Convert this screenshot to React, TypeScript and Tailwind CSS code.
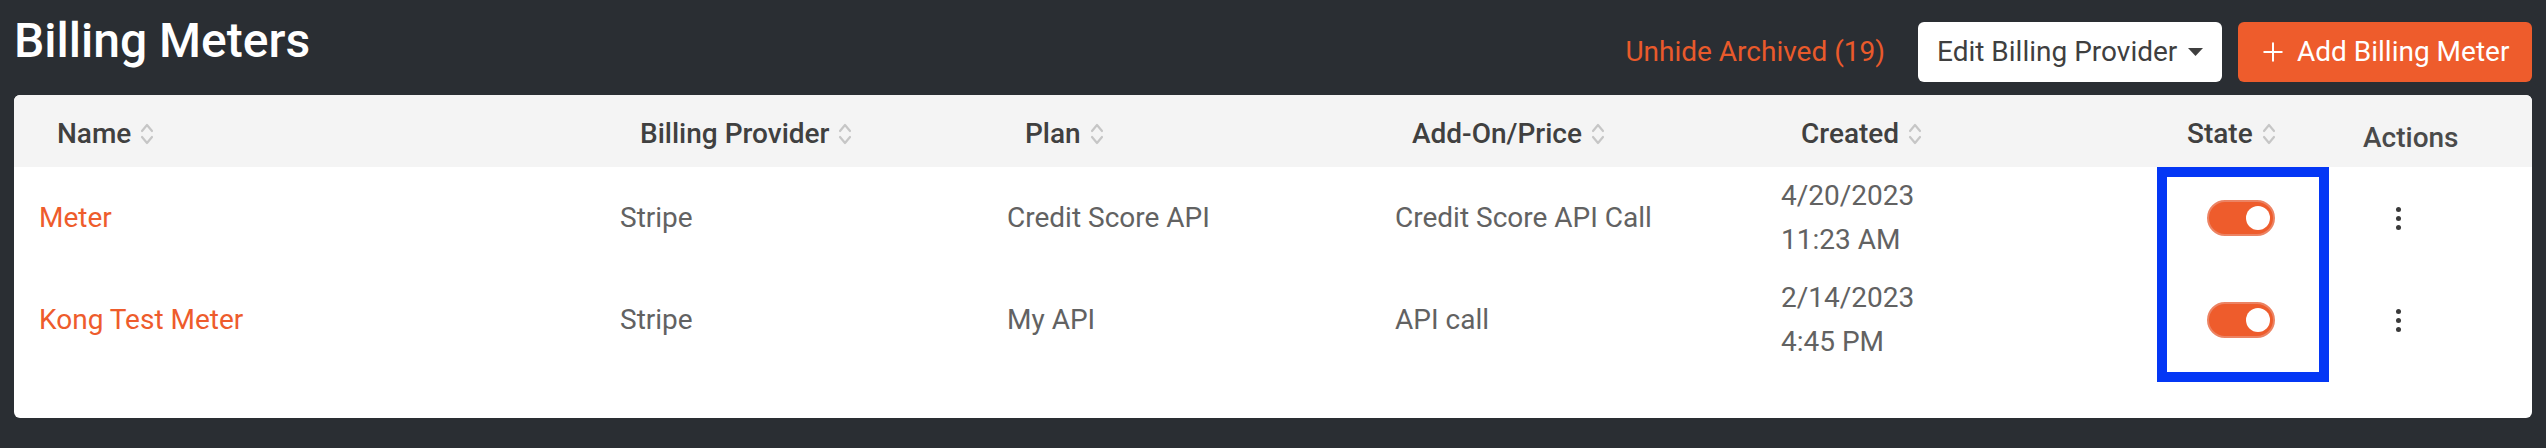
import { Plus } from "lucide-react";

const font = { fontFamily: "Roboto, 'Liberation Sans', sans-serif" };

type Meter = {
  name: string;
  provider: string;
  plan: string;
  addon: string;
  date: string;
  time: string;
};

const meters: Meter[] = [
  { name: "Meter", provider: "Stripe", plan: "Credit Score API", addon: "Credit Score API Call", date: "4/20/2023", time: "11:23 AM" },
  { name: "Kong Test Meter", provider: "Stripe", plan: "My API", addon: "API call", date: "2/14/2023", time: "4:45 PM" },
];

function SortIcon() {
  return (
    <svg width="14" height="24" viewBox="0 0 14 24" fill="none" className="ml-[9px] shrink-0">
      <polyline points="2,9 7,3 12,9" stroke="#c6c6c6" strokeWidth="2.2" strokeLinecap="round" strokeLinejoin="round" />
      <polyline points="2,15 7,21 12,15" stroke="#c6c6c6" strokeWidth="2.2" strokeLinecap="round" strokeLinejoin="round" />
    </svg>
  );
}

function HeaderLabel({ label, className }: { label: string; className: string }) {
  return (
    <div className={`flex items-center pt-[6px] ${className}`}>
      <span className="text-[28px] leading-[42px] font-medium text-[#404040]">{label}</span>
      <SortIcon />
    </div>
  );
}

function Toggle() {
  return (
    <div className="w-[68px] h-[36px] rounded-full bg-[#ee5c2c] border-2 border-[#ec8363] flex items-center justify-end pr-[3px]">
      <div className="w-[24px] h-[24px] rounded-full bg-white" />
    </div>
  );
}

function Kebab() {
  return (
    <div className="flex flex-col gap-[4px]">
      <div className="w-[5px] h-[5px] rounded-full bg-[#3a3a3a]" />
      <div className="w-[5px] h-[5px] rounded-full bg-[#3a3a3a]" />
      <div className="w-[5px] h-[5px] rounded-full bg-[#3a3a3a]" />
    </div>
  );
}

const cols = "grid grid-cols-[581px_387px_388px_386px_392px_192px_1fr]";

export default function App() {
  return (
    <div style={font} className="w-full h-[448px] bg-[#2a2e33] px-[14px] pt-[17px]">
      <div className="flex items-start justify-between">
        <h1 className="text-[48px] leading-[48px] font-medium text-white">Billing Meters</h1>
        <div className="flex items-center mt-[5px]">
          <button className="text-[28px] text-[#e95a2b] mr-[33px]">Unhide Archived (19)</button>
          <button className="h-[60px] w-[304px] bg-white rounded-[6px] flex items-center pl-[19px] text-[28px] text-[#3f3f3f]">
            Edit Billing Provider
            <svg width="15" height="8" viewBox="0 0 15 8" className="ml-[11px]">
              <polygon points="0,0 15,0 7.5,8" fill="#3f3f3f" />
            </svg>
          </button>
          <button className="h-[60px] w-[294px] ml-[16px] bg-[#ee5c2c] rounded-[6px] flex items-center pl-[20px] text-[28px] text-white">
            <Plus className="w-[30px] h-[30px]" strokeWidth={1.6} />
            <span className="ml-[9px]">Add Billing Meter</span>
          </button>
        </div>
      </div>

      <div className="relative mt-[13px] bg-white rounded-[6px] overflow-hidden h-[323px]">
        <div className={`${cols} h-[72px] bg-[#f4f4f4]`}>
          <HeaderLabel label="Name" className="pl-[43px]" />
          <HeaderLabel label="Billing Provider" className="pl-[45px]" />
          <HeaderLabel label="Plan" className="pl-[43px]" />
          <HeaderLabel label="Add-On/Price" className="pl-[42px]" />
          <HeaderLabel label="Created" className="pl-[45px]" />
          <HeaderLabel label="State" className="pl-[39px]" />
          <div className="pl-[23px] pt-[22px] text-[28px] leading-[42px] font-medium text-[#4a4a4a]">Actions</div>
        </div>

        {meters.map((m) => (
          <div key={m.name} className={`${cols} h-[102px] items-center text-[28px] text-[#626262]`}>
            <div className="pl-[25px] text-[#ee5c2c]">{m.name}</div>
            <div className="pl-[25px]">{m.provider}</div>
            <div className="pl-[25px]">{m.plan}</div>
            <div className="pl-[25px]">{m.addon}</div>
            <div className="pl-[25px] leading-[44px]">
              <div>{m.date}</div>
              <div>{m.time}</div>
            </div>
            <div className="pl-[59px]">
              <Toggle />
            </div>
            <div className="pl-[56px]">
              <Kebab />
            </div>
          </div>
        ))}

        <div className="absolute left-[2143px] top-[72px] w-[172px] h-[215px] border-[10px] border-[#0437f5]" />
      </div>
    </div>
  );
}
